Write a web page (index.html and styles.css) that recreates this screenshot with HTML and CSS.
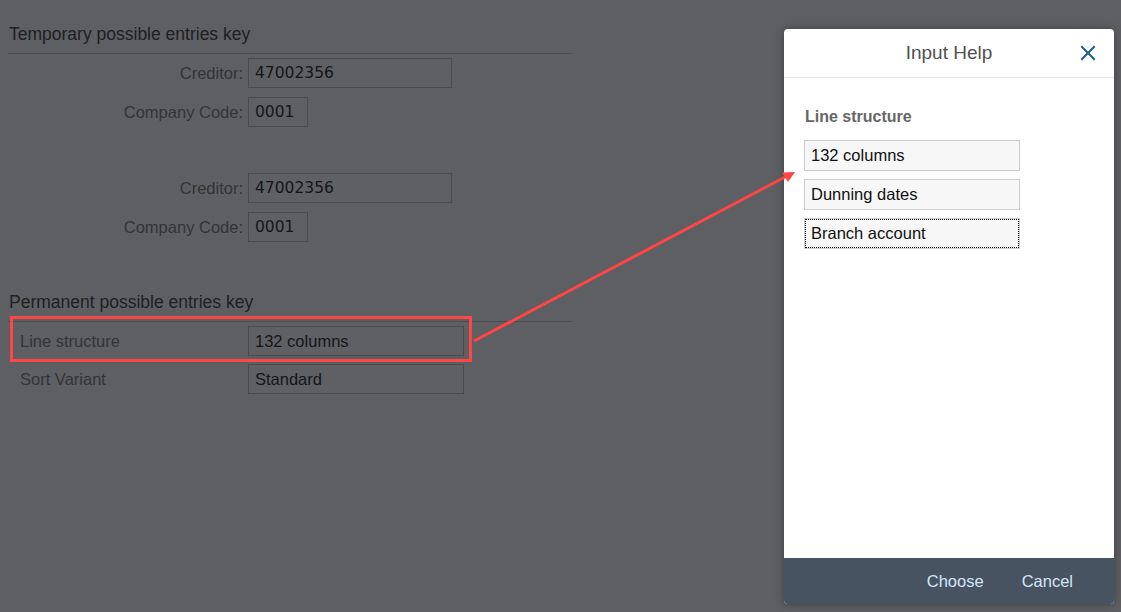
FILE: index.html
```html
<!DOCTYPE html>
<html lang="en">
<head>
<meta charset="utf-8">
<title>Input Help</title>
<link rel="stylesheet" href="styles.css">
</head>
<body>
<div class="page">
  <section class="group group-temp">
    <h2 class="group-title">Temporary possible entries key</h2>
    <div class="form">
      <div class="row"><span class="label">Creditor:</span><span class="field field-wide">47002356</span></div>
      <div class="row"><span class="label">Company Code:</span><span class="field field-short">0001</span></div>
    </div>
    <div class="form form-second">
      <div class="row"><span class="label">Creditor:</span><span class="field field-wide">47002356</span></div>
      <div class="row"><span class="label">Company Code:</span><span class="field field-short">0001</span></div>
    </div>
  </section>

  <section class="group group-perm">
    <h2 class="group-title">Permanent possible entries key</h2>
    <div class="form form-left">
      <div class="row"><span class="label">Line structure</span><span class="field field-mid field-sans">132 columns</span></div>
      <div class="row"><span class="label">Sort Variant</span><span class="field field-mid field-sans">Standard</span></div>
    </div>
  </section>
</div>

<div class="highlight"></div>

<div class="dialog">
  <header class="dialog-header">
    <span class="dialog-title">Input Help</span>
    <button class="dialog-close" aria-label="Close">
      <svg width="16" height="16" viewBox="0 0 16 16"><path d="M2 2 L14 14 M14 2 L2 14" stroke="currentColor" stroke-width="2" stroke-linecap="square" fill="none"/></svg>
    </button>
  </header>
  <div class="dialog-body">
    <div class="list-title">Line structure</div>
    <div class="list">
      <div class="option">132 columns</div>
      <div class="option">Dunning dates</div>
      <div class="option option-focus">Branch account</div>
    </div>
  </div>
  <footer class="dialog-footer">
    <button class="btn">Choose</button>
    <button class="btn">Cancel</button>
  </footer>
</div>

<svg class="arrow" width="1121" height="612" viewBox="0 0 1121 612">
  <line x1="474" y1="341" x2="787" y2="176" stroke="#ff4545" stroke-width="3"/>
  <polygon points="795,172 782,172.5 788,182" fill="#ff4545"/>
</svg>
</body>
</html>
```

FILE: styles.css
```css
html, body {
  margin: 0;
  padding: 0;
}
body {
  width: 1121px;
  height: 612px;
  overflow: hidden;
  background: #5e5f62;
  font-family: "Liberation Sans", Arial, sans-serif;
  position: relative;
}
.page {
  width: 564px;
  padding-left: 8px;
  padding-top: 22px;
}
.group-title {
  margin: 0;
  font-weight: normal;
  font-size: 17.5px;
  line-height: 24px;
  color: #1f2022;
  padding-left: 1px;
  padding-bottom: 7px;
  border-bottom: 1px solid #4d4e51;
}
.form {
  display: flex;
  flex-direction: column;
  gap: 9px;
  padding-top: 4px;
}
.form-second {
  padding-top: 46px;
}
.row {
  display: grid;
  grid-template-columns: 235px auto;
  column-gap: 5px;
  align-items: center;
}
.label {
  text-align: right;
  font-size: 16.5px;
  color: #333436;
}
.form-left .label {
  text-align: left;
  padding-left: 12px;
}
.field {
  box-sizing: border-box;
  height: 30px;
  border: 1px solid #4a4b4e;
  background: #5f6063;
  font-family: "DejaVu Sans", Verdana, sans-serif;
  font-size: 15.5px;
  line-height: 28px;
  padding-left: 6px;
  color: #151618;
}
.field-wide { width: 204px; }
.field-short { width: 60px; }
.field-mid { width: 216px; }
.field-sans {
  font-family: "Liberation Sans", Arial, sans-serif;
  font-size: 16.5px;
}
.group-perm {
  margin-top: 48px;
}
.group-perm .form {
  gap: 8px;
}

.highlight {
  position: absolute;
  left: 10px;
  top: 316px;
  width: 456px;
  height: 40px;
  border: 3px solid #ff4545;
}

.dialog {
  position: absolute;
  left: 784px;
  top: 29px;
  width: 330px;
  height: 575px;
  background: #ffffff;
  border-radius: 4px;
  box-shadow: 0 0 8px rgba(0, 0, 0, 0.35);
  display: flex;
  flex-direction: column;
  overflow: hidden;
}
.dialog-header {
  height: 48px;
  flex: none;
  border-bottom: 1px solid #e5e5e5;
  display: flex;
  align-items: center;
  justify-content: center;
  position: relative;
}
.dialog-title {
  font-size: 19px;
  color: #4f5052;
}
.dialog-close {
  position: absolute;
  right: 18px;
  top: 16px;
  width: 16px;
  height: 16px;
  padding: 0;
  border: 0;
  background: none;
  color: #1d5d8c;
  display: flex;
}
.dialog-body {
  flex: 1;
  padding: 30px 20px 0 20px;
}
.list-title {
  font-size: 16px;
  font-weight: bold;
  color: #666666;
  line-height: 18px;
  padding-left: 1px;
}
.list {
  margin-top: 14px;
  display: flex;
  flex-direction: column;
  gap: 8px;
}
.option {
  box-sizing: border-box;
  width: 216px;
  height: 31px;
  border: 1px solid #cccccc;
  background: #f7f7f7;
  font-size: 16.5px;
  line-height: 29px;
  padding-left: 6px;
  color: #111111;
}
.option-focus {
  outline: 1px dotted #000;
  outline-offset: -2px;
}
.dialog-footer {
  height: 46px;
  flex: none;
  background: #475360;
  display: flex;
  align-items: center;
  justify-content: flex-end;
  gap: 38px;
  padding-right: 41px;
}
.btn {
  background: none;
  border: 0;
  padding: 0;
  font-family: "Liberation Sans", Arial, sans-serif;
  font-size: 16.5px;
  color: #d3e6f8;
}
.arrow {
  position: absolute;
  left: 0;
  top: 0;
  pointer-events: none;
}
```
